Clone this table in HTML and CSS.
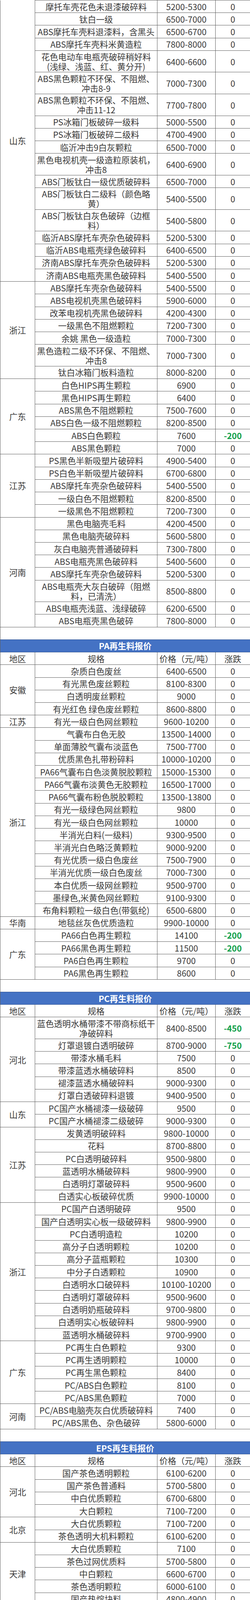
FILE: index.html
```html
<!DOCTYPE html>
<html lang="zh-CN">
<head>
<meta charset="utf-8">
<title>再生料报价</title>
<link rel="stylesheet" href="styles.css">
</head>
<body>
<table class="sheet">
<colgroup><col class="c-reg"><col class="c-spec"><col class="c-price"><col class="c-chg"></colgroup>
<tbody>
<tr><td class="reg top-open" rowspan="18">山东</td><td>摩托车壳花色未退漆破碎料</td><td>5200-5300</td><td>0</td></tr>
<tr><td>钛白一级</td><td>6500-7000</td><td>0</td></tr>
<tr><td>ABS摩托车壳料退漆料，含黑头</td><td>6500-6700</td><td>0</td></tr>
<tr><td>ABS摩托车壳料米黄造粒</td><td>7800-8000</td><td>0</td></tr>
<tr class="dbl"><td>花色电动车电瓶壳破碎稍好料<br>(浅绿、浅蓝、红、黄分开)</td><td>6400-6600</td><td>0</td></tr>
<tr class="dbl"><td>ABS黑色颗粒不环保、不阻燃、<br>冲击8-9</td><td>7000-7300</td><td>0</td></tr>
<tr class="dbl"><td>ABS黑色颗粒不环保、不阻燃、<br>冲击11-12</td><td>7700-7800</td><td>0</td></tr>
<tr><td>PS冰箱门板破碎一级料</td><td>5000-5500</td><td>0</td></tr>
<tr><td>PS冰箱门板破碎二级料</td><td>4700-4900</td><td>0</td></tr>
<tr><td>临沂冲击9白灰颗粒</td><td>6500-7000</td><td>0</td></tr>
<tr class="dbl"><td>黑色电视机壳一级造粒原装机，<br>冲击8</td><td>6400-6900</td><td>0</td></tr>
<tr><td>ABS门板钛白一级优质破碎料</td><td>6500-7000</td><td>0</td></tr>
<tr class="dbl"><td>ABS门板钛白二级料（颜色略<br>黄）</td><td>5400-5500</td><td>0</td></tr>
<tr class="dbl"><td>ABS门板钛白灰色破碎（边框<br>料）</td><td>5400-5800</td><td>0</td></tr>
<tr><td>临沂ABS摩托车壳杂色破碎料</td><td>5200-5300</td><td>0</td></tr>
<tr><td>临沂ABS电瓶壳绿色破碎料</td><td>6400-6500</td><td>0</td></tr>
<tr><td>济南ABS摩托车壳杂色破碎料</td><td>5200-5300</td><td>0</td></tr>
<tr><td>济南ABS电瓶壳黑色破碎料</td><td>5400-5500</td><td>0</td></tr>

<tr><td class="reg" rowspan="7">浙江</td><td>ABS摩托车壳杂色破碎料</td><td>5400-5500</td><td>0</td></tr>
<tr><td>ABS电视机壳黑色破碎料</td><td>5900-6000</td><td>0</td></tr>
<tr><td>改苯电视机壳黑色破碎料</td><td>4200-4300</td><td>0</td></tr>
<tr><td>一级黑色不阻燃颗粒</td><td>7200-7300</td><td>0</td></tr>
<tr><td>余姚 黑色一级造粒</td><td>7000-7300</td><td>0</td></tr>
<tr class="dbl"><td>黑色造粒二级不环保、不阻燃、<br>冲击8</td><td>7000-7300</td><td>0</td></tr>
<tr><td>钛白冰箱门板料造粒</td><td>8000-8200</td><td>0</td></tr>

<tr><td class="reg" rowspan="6">广东</td><td>白色HIPS再生颗粒</td><td>6900</td><td>0</td></tr>
<tr><td>黑色HIPS再生颗粒</td><td>6400</td><td>0</td></tr>
<tr><td>ABS黑色不阻燃颗粒</td><td>7500-7600</td><td>0</td></tr>
<tr><td>ABS白色一级不阻燃颗粒</td><td>8200-8500</td><td>0</td></tr>
<tr><td>ABS白色颗粒</td><td>7600</td><td class="down">-200</td></tr>
<tr><td>ABS黑色颗粒</td><td>7000</td><td>0</td></tr>

<tr><td class="reg" rowspan="5">江苏</td><td>PS黑色半新吸塑片破碎料</td><td>4900-5400</td><td>0</td></tr>
<tr><td>PS白色半新吸塑片破碎料</td><td>6700-6800</td><td>0</td></tr>
<tr><td>ABS摩托车壳杂色破碎料</td><td>5400-5500</td><td>0</td></tr>
<tr><td>一级白色不阻燃颗粒</td><td>8200-8500</td><td>0</td></tr>
<tr><td>一级黑色不阻燃颗粒</td><td>7200-7300</td><td>0</td></tr>

<tr><td class="reg" rowspan="8">河南</td><td>黑色电脑壳毛料</td><td>4200-4500</td><td>0</td></tr>
<tr><td>黑色电脑壳破碎料</td><td>5600-5800</td><td>0</td></tr>
<tr><td>灰白电脑壳普通破碎料</td><td>7300-7800</td><td>0</td></tr>
<tr><td>ABS电瓶壳黑色破碎料</td><td>5400-5600</td><td>0</td></tr>
<tr><td>ABS摩托车壳杂色破碎料</td><td>5200-5300</td><td>0</td></tr>
<tr class="dbl"><td>ABS电瓶壳大灰白破碎（阻燃<br>料，已清洗）</td><td>8500-8800</td><td>0</td></tr>
<tr><td>ABS电瓶壳浅蓝、浅绿破碎</td><td>6200-6500</td><td>0</td></tr>
<tr><td>ABS电瓶壳黑色破碎</td><td>7800-8000</td><td>0</td></tr>

<tr class="gap"><td colspan="4"></td></tr>
<tr class="title"><td colspan="4">PA再生料报价</td></tr>
<tr class="head"><td>地区</td><td>规格</td><td>价格（元/吨）</td><td>涨跌</td></tr>
<tr><td class="reg" rowspan="4">安徽</td><td>杂质白色废丝</td><td>6400-6500</td><td>0</td></tr>
<tr><td>有光黑色废丝颗粒</td><td>8100-8300</td><td>0</td></tr>
<tr><td>白透明废丝颗粒</td><td>9000</td><td>0</td></tr>
<tr><td>有光红色 绿色废丝颗粒</td><td>8600-8800</td><td>0</td></tr>
<tr><td class="reg">江苏</td><td>有光一级白色网丝颗粒</td><td>9600-10200</td><td>0</td></tr>
<tr><td class="reg" rowspan="15">浙江</td><td>气囊布白色无胶</td><td>13500-14000</td><td>0</td></tr>
<tr><td>单面薄胶气囊布淡蓝色</td><td>7500-7700</td><td>0</td></tr>
<tr><td>优质黑色扎带粉碎料</td><td>10000-10200</td><td>0</td></tr>
<tr><td>PA66气囊布白色淡黄脱胶颗粒</td><td>15000-15300</td><td>0</td></tr>
<tr><td>PA66气囊布淡黄色无胶颗粒</td><td>16500-17000</td><td>0</td></tr>
<tr><td>PA66气囊布粉色脱胶颗粒</td><td>13500-13800</td><td>0</td></tr>
<tr><td>有光一级绿色网丝颗粒</td><td>9800</td><td>0</td></tr>
<tr><td>有光一级白色网丝颗粒</td><td>10000</td><td>0</td></tr>
<tr><td>半消光白料(一级料)</td><td>9300-9500</td><td>0</td></tr>
<tr><td>半消光白色略泛黄颗粒</td><td>9000-9200</td><td>0</td></tr>
<tr><td>有光优质一级白色废丝</td><td>7500-7900</td><td>0</td></tr>
<tr><td>半消光优质一级白色废丝</td><td>7000-7300</td><td>0</td></tr>
<tr><td>本白优质一级网丝颗粒</td><td>9500-9700</td><td>0</td></tr>
<tr><td>墨绿色,米黄色网丝颗粒</td><td>9100-9300</td><td>0</td></tr>
<tr><td>布角料颗粒一级白色(带氨纶)</td><td>6500-6800</td><td>0</td></tr>
<tr><td class="reg">华南</td><td>地毯丝灰色优质造粒</td><td>9900-10000</td><td>0</td></tr>
<tr><td class="reg" rowspan="4">广东</td><td>PA66白色再生颗粒</td><td>14100</td><td class="down">-200</td></tr>
<tr><td>PA66黑色再生颗粒</td><td>11500</td><td class="down">-200</td></tr>
<tr><td>PA6白色再生颗粒</td><td>9700</td><td>0</td></tr>
<tr><td>PA6黑色再生颗粒</td><td>8600</td><td>0</td></tr>

<tr class="gap"><td colspan="4"></td></tr>
<tr class="title"><td colspan="4">PC再生料报价</td></tr>
<tr class="head"><td>地区</td><td>规格</td><td>价格（元/吨）</td><td>涨跌</td></tr>
<tr class="dbl"><td class="reg" rowspan="6">河北</td><td>蓝色透明水桶带漆不带商标纸干<br>净破碎料</td><td>8400-8500</td><td class="down">-450</td></tr>
<tr><td>灯罩退镀白透明破碎</td><td>8700-9000</td><td class="down">-750</td></tr>
<tr><td>带漆水桶毛料</td><td>7500</td><td>0</td></tr>
<tr><td>带漆蓝透水桶破碎料</td><td>8500</td><td>0</td></tr>
<tr><td>褪漆蓝透水桶破碎料</td><td>9000-9300</td><td>0</td></tr>
<tr><td>灯罩白透破碎料退镀</td><td>9400-9500</td><td>0</td></tr>
<tr><td class="reg" rowspan="2">山东</td><td>PC国产水桶褪漆一级破碎</td><td>9500</td><td>0</td></tr>
<tr><td>PC国产水桶褪漆二级破碎</td><td>9000-9300</td><td>0</td></tr>
<tr><td class="reg" rowspan="6">江苏</td><td>发黄透明破碎料</td><td>9800-10000</td><td>0</td></tr>
<tr><td>花料</td><td>8700-8800</td><td>0</td></tr>
<tr><td>PC白透明破碎料</td><td>9500-9800</td><td>0</td></tr>
<tr><td>蓝透明水桶破碎料</td><td>9800-9900</td><td>0</td></tr>
<tr><td>白透明灯罩破碎料</td><td>9500-9600</td><td>0</td></tr>
<tr><td>白透实心板破碎优质</td><td>9900-10000</td><td>0</td></tr>
<tr><td class="reg" rowspan="11">浙江</td><td>PC国产白透明破碎</td><td>9500</td><td>0</td></tr>
<tr><td>国产白透明实心板一级破碎料</td><td>9800-9900</td><td>0</td></tr>
<tr><td>PC白透明造粒</td><td>10200</td><td>0</td></tr>
<tr><td>高分子白透明颗粒</td><td>10200</td><td>0</td></tr>
<tr><td>高分子蓝瓶颗粒</td><td>10300</td><td>0</td></tr>
<tr><td>中分子白透颗粒</td><td>10900</td><td>0</td></tr>
<tr><td>白透明水口破碎料</td><td>10100-10200</td><td>0</td></tr>
<tr><td>白透明灯罩破碎料</td><td>9500-9600</td><td>0</td></tr>
<tr><td>白透明奶瓶破碎料</td><td>9700-9800</td><td>0</td></tr>
<tr><td>白透明实心板破碎料</td><td>9800-9900</td><td>0</td></tr>
<tr><td>蓝透明水桶破碎料</td><td>9700-9900</td><td>0</td></tr>
<tr><td class="reg" rowspan="5">广东</td><td>PC再生白色颗粒</td><td>9300</td><td>0</td></tr>
<tr><td>PC再生透明颗粒</td><td>10000</td><td>0</td></tr>
<tr><td>PC再生黑色颗粒</td><td>8400</td><td>0</td></tr>
<tr><td>PC/ABS白色颗粒</td><td>8100</td><td>0</td></tr>
<tr><td>PC/ABS黑色颗粒</td><td>7000</td><td>0</td></tr>
<tr><td class="reg" rowspan="2">河南</td><td>PC/ABS电脑壳灰白优质破碎料</td><td>7400</td><td>0</td></tr>
<tr><td>PC/ABS黑色、杂色破碎</td><td>5800-6000</td><td>0</td></tr>

<tr class="gap"><td colspan="4"></td></tr>
<tr class="title"><td colspan="4">EPS再生料报价</td></tr>
<tr class="head"><td>地区</td><td>规格</td><td>价格（元/吨）</td><td>涨跌</td></tr>
<tr><td class="reg" rowspan="4">河北</td><td>国产茶色透明颗粒</td><td>6100-6200</td><td>0</td></tr>
<tr><td>国产茶色普通料</td><td>5700-5800</td><td>0</td></tr>
<tr><td>中白优质颗粒</td><td>6700-6800</td><td>0</td></tr>
<tr><td>大白颗粒</td><td>7100-7200</td><td>0</td></tr>
<tr><td class="reg" rowspan="2">北京</td><td>大白优质颗粒</td><td>7100-7200</td><td>0</td></tr>
<tr><td>茶色透明大机料颗粒</td><td>6100-6200</td><td>0</td></tr>
<tr><td class="reg" rowspan="5">天津</td><td>大白优质颗粒</td><td>7100</td><td>0</td></tr>
<tr><td>茶色过网优质料</td><td>5700-5800</td><td>0</td></tr>
<tr><td>中白颗粒</td><td>6600-6700</td><td>0</td></tr>
<tr><td>茶色透明颗粒</td><td>6000-6100</td><td>0</td></tr>
<tr><td>国产热熔块料</td><td>4800-4900</td><td>0</td></tr>
<tr><td class="reg" rowspan="6">广东</td><td>优质大白颗粒</td><td>7000-7100</td><td>0</td></tr>
<tr><td>优质中白颗粒</td><td>6500-6600</td><td>0</td></tr>
<tr><td>国产茶色透明颗粒</td><td>6000</td><td>0</td></tr>
<tr><td>国产茶色颗粒</td><td>5700-5800</td><td>0</td></tr>
<tr><td>白色优质料冷压块</td><td>5100-5200</td><td>0</td></tr>
<tr><td>淡蓝色再生颗粒</td><td>5600</td><td>0</td></tr>
<tr><td class="reg" rowspan="6">福建</td><td>大白过网优质颗粒</td><td>7000-7100</td><td>0</td></tr>
<tr><td>大白不过网颗粒</td><td>6900</td><td>0</td></tr>
<tr><td>中白过网颗粒</td><td>6600-6700</td><td>0</td></tr>
<tr><td>中白不过网颗粒</td><td>6500</td><td>0</td></tr>
<tr><td>茶色不过网造粒</td><td>5600</td><td>0</td></tr>
<tr><td>茶透过网颗粒</td><td>6000</td><td>0</td></tr>
<tr><td class="reg" rowspan="7">山东</td><td>中白优质颗粒</td><td>6600-6700</td><td>0</td></tr>
<tr><td>茶色透明优质颗粒</td><td>6100-6200</td><td>0</td></tr>
<tr><td>茶色普通颗粒</td><td>5700</td><td>0</td></tr>
<tr><td>白色一级造粒</td><td>7100-7200</td><td>0</td></tr>
<tr><td>大白颗粒</td><td>7100-7200</td><td>0</td></tr>
<tr><td>优质料热熔块</td><td>5200-5300</td><td>0</td></tr>
<tr><td>优质料冷压块</td><td>4800-4900</td><td>0</td></tr>
<tr><td class="reg">安徽</td><td>茶色热熔块</td><td>5000-5100</td><td class="up">150</td></tr>
<tr><td class="reg" rowspan="3">江苏</td><td>大白优质料</td><td>7000-7100</td><td>0</td></tr>
<tr><td>中白优质料</td><td>6500-6600</td><td>0</td></tr>
<tr><td>茶色透明优质颗粒</td><td>6000</td><td>0</td></tr>
<tr><td class="reg" rowspan="6">河南</td><td>大白优质颗粒</td><td>7000-7200</td><td class="down">-50</td></tr>
<tr><td>茶色透明优质颗粒</td><td>6200-6300</td><td>0</td></tr>
<tr><td>中白颗粒</td><td>6700-6800</td><td>0</td></tr>
<tr><td>普通茶色过网料</td><td>5700-5800</td><td>0</td></tr>
<tr><td>中白优质颗粒</td><td>6600-6800</td><td>0</td></tr>
<tr><td>茶色透明颗粒</td><td>6000-6100</td><td>0</td></tr>

<tr class="gap"><td colspan="4"></td></tr>
<tr class="title"><td colspan="4">PMMA再生料报价</td></tr>
<tr class="head"><td>地区</td><td>规格</td><td>价格（元/吨）</td><td>涨跌</td></tr>
<tr><td class="reg" rowspan="3">广东</td><td>透明再生颗粒</td><td>10000</td><td>0</td></tr>
<tr><td>白色再生颗粒</td><td>9000</td><td>0</td></tr>
<tr><td>黑色再生颗粒</td><td>8200</td><td>0</td></tr>
<tr><td class="reg" rowspan="6">江苏</td><td>净色板材</td><td>4000-5000</td><td>0</td></tr>
<tr><td>原色透明破碎</td><td>3800-4200</td><td>0</td></tr>
<tr><td>废片材</td><td>1900-2000</td><td>0</td></tr>
<tr><td>杂色板材</td><td>1600-1700</td><td>0</td></tr>
<tr><td>杂色胶块</td><td>1800-2000</td><td>0</td></tr>
<tr><td>杂色破碎料</td><td>2100-2200</td><td>0</td></tr>

<tr class="gap"><td colspan="4"></td></tr>
<tr class="title"><td colspan="4">POM再生料报价</td></tr>
<tr class="head"><td>地区</td><td>规格</td><td>价格（元/吨）</td><td>涨跌</td></tr>
<tr><td class="reg" rowspan="2">广东</td><td>POM黑色粒料</td><td>7100</td><td class="up">100</td></tr>
<tr><td>POM白色粒料</td><td>7600</td><td class="up">100</td></tr>

<tr class="gap"><td colspan="4"></td></tr>
<tr class="title"><td colspan="4">EVA再生料报价</td></tr>
<tr class="head"><td>地区</td><td>规格</td><td>价格（元/吨）</td><td>涨跌</td></tr>
<tr><td class="reg" rowspan="2">河北</td><td>保定EVA造粒</td><td>5300</td><td>0</td></tr>
<tr><td>玉田EVA造粒</td><td>5200-5300</td><td>0</td></tr>
<tr><td class="reg" rowspan="3">山东</td><td>临沂EVA造粒</td><td>5100-5200</td><td>0</td></tr>
<tr><td>莒县EVA造粒</td><td>5100-5200</td><td>0</td></tr>
<tr><td>EVA白透一级颗粒</td><td>5100-5200</td><td>0</td></tr>
<tr><td class="reg" rowspan="2">广东</td><td>EVA透明颗粒</td><td>7000</td><td>0</td></tr>
<tr><td>EVA白色再生颗粒</td><td>6000</td><td>0</td></tr>
<tr class="note"><td colspan="4">注：表格中报价来自网络，均为不含税到厂价</td></tr>
</tbody>
</table>
</body>
</html>
```

FILE: styles.css
```css
html, body {
  margin: 0;
  padding: 0;
  background: #ffffff;
}

.sheet {
  width: 640px;
  border-collapse: collapse;
  table-layout: fixed;
  font-family: "Noto Sans CJK SC", sans-serif;
  font-size: 21.6px;
  color: #3a3a3a;
}

.c-reg { width: 89px; }
.c-spec { width: 313px; }
.c-price { width: 149px; }
.c-chg { width: 89px; }

.sheet tr {
  height: 32.22px;
}

.sheet tr.dbl {
  height: 55.6px;
}

.sheet td {
  border: 1px solid #5e5e5e;
  padding: 0;
  line-height: 20px;
  text-align: center;
  vertical-align: middle;
  white-space: nowrap;
}

.sheet tr.dbl td {
  line-height: 25px;
}

.sheet td.top-open {
  border-top: none;
}

.sheet tr.gap td {
  border-top: none;
  border-bottom: none;
}

.sheet tr.title td {
  background: #4472c4;
  color: #ffffff;
  font-weight: 700;
  border-top: 1px solid #2f528f;
  border-bottom: 1px solid #2f528f;
}

.sheet td.down {
  color: #12a04a;
  font-weight: 700;
}

.sheet td.up {
  color: #e0001b;
  font-weight: 700;
}
```
